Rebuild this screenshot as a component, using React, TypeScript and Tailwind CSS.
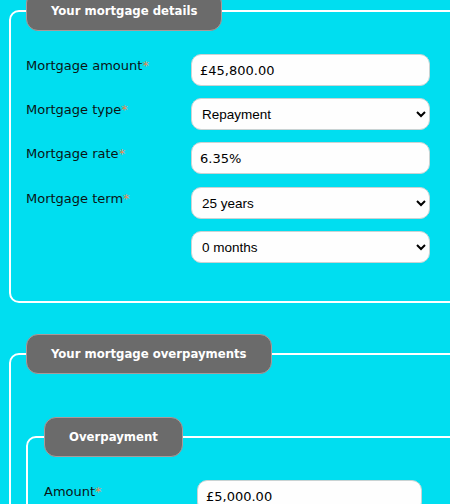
import React from 'react';

const labelFont = "font-['DejaVu_Sans',Verdana,sans-serif]";
const legendCls =
    "h-[40px] rounded-[12px] border border-[#a89a9a] bg-[#6b6b6b] px-[24px] font-['DejaVu_Sans_Condensed','DejaVu_Sans',sans-serif] text-[13px] font-bold leading-[38px] text-white";
const inputCls =
    "h-[32px] w-full rounded-[10px] border border-[#c9d3d3] bg-[#fefefe] px-[8px] font-['DejaVu_Sans',Verdana,sans-serif] text-[13px] text-black outline-none";
const selectCls =
    "h-[32px] w-full rounded-[10px] border border-[#c9d3d3] bg-[#fefefe] pl-[6px] pr-[6px] font-['Liberation_Sans',Arial,sans-serif] text-[13.5px] text-black outline-none";

const Label: React.FC<{ text?: string }> = ({ text }) => (
    <div className={`${labelFont} pt-[4px] text-[13px] leading-[16px] text-[#0a1414]`}>
        {text && (
            <>
                {text}
                <span className="text-[#e8894f]">*</span>
            </>
        )}
    </div>
);

const App: React.FC = () => {
    return (
        <div className="h-[504px] w-[450px] overflow-hidden bg-[#00def0]">
            <div className="-mt-[9px] ml-[9px] w-[540px]">
                {/* Mortgage details */}
                <fieldset className="rounded-[10px] border-2 border-white px-[15px] pt-[23px] pb-[38px]">
                    <legend className={legendCls}>Your mortgage details</legend>
                    <div className="grid grid-cols-[165px_239px] gap-y-[12px]">
                        <Label text="Mortgage amount" />
                        <input className={inputCls} defaultValue="£45,800.00" />

                        <Label text="Mortgage type" />
                        <select className={selectCls} defaultValue="repayment">
                            <option value="repayment">Repayment</option>
                            <option value="interest">Interest only</option>
                        </select>

                        <Label text="Mortgage rate" />
                        <input className={inputCls} defaultValue="6.35%" />

                        <div className="col-span-2 mt-px grid grid-cols-[165px_239px] gap-y-[12px]">
                            <Label text="Mortgage term" />
                            <select className={selectCls} defaultValue="25">
                                <option value="25">25 years</option>
                            </select>

                            <Label />
                            <select className={selectCls} defaultValue="0">
                                <option value="0">0 months</option>
                            </select>
                        </div>
                    </div>
                </fieldset>

                {/* Overpayments */}
                <fieldset className="mt-[31px] rounded-[10px] border-2 border-white px-[15px] pt-[43px] pb-[30px]">
                    <legend className={legendCls}>Your mortgage overpayments</legend>
                    <fieldset className="rounded-[10px] border-2 border-white px-[16px] pt-[23px] pb-[30px]">
                        <legend className={legendCls}>Overpayment</legend>
                        <div className="grid grid-cols-[153px_225px] gap-y-[12px]">
                            <Label text="Amount" />
                            <input className={inputCls} defaultValue="£5,000.00" />
                        </div>
                    </fieldset>
                </fieldset>
            </div>
        </div>
    );
};

export default App;
